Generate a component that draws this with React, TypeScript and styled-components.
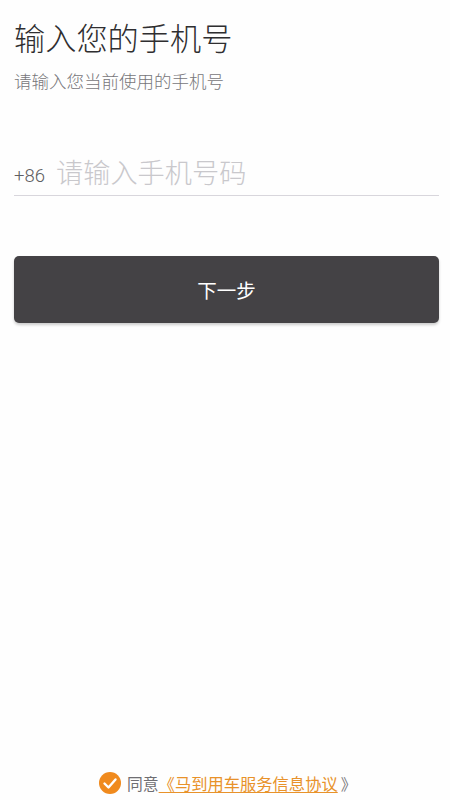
import React from 'react';
import styled, { createGlobalStyle } from 'styled-components';

const GlobalStyle = createGlobalStyle`
  html, body {
    margin: 0;
    padding: 0;
    background: #fefefe;
  }
  body {
    font-family: 'Roboto', 'Noto Sans CJK SC', sans-serif;
  }
`;

const Page = styled.div`
  width: 450px;
  height: 800px;
  box-sizing: border-box;
  overflow: hidden;
  padding: 20px 11px 0 14px;
  display: flex;
  flex-direction: column;
  background: #fefefe;
`;

const Title = styled.h1`
  margin: 0;
  font-size: 31.2px;
  line-height: 40px;
  font-weight: 300;
  color: #2f2e30;
`;

const Subtitle = styled.p`
  margin: 2px 0 0;
  font-size: 17.5px;
  line-height: 40px;
  font-weight: 300;
  color: #77767a;
`;

const PhoneRow = styled.div`
  margin-top: 49px;
  height: 44px;
  display: flex;
  align-items: center;
  border-bottom: 1px solid #d8d6dc;
`;

const Prefix = styled.span`
  width: 42px;
  flex: none;
  padding-top: 5px;
  font-size: 18.5px;
  font-weight: 300;
  color: #5f5e62;
`;

const PhoneInput = styled.input`
  flex: 1;
  min-width: 0;
  padding: 2px 0 0;
  border: none;
  outline: none;
  background: transparent;
  font-family: inherit;
  font-size: 27.2px;
  font-weight: 300;
  color: #2f2e30;

  &::placeholder {
    color: #c9c8cc;
    opacity: 1;
  }
`;

const NextButton = styled.button`
  margin-top: 60px;
  height: 67px;
  width: 100%;
  border: none;
  border-radius: 5px;
  background: #444245;
  box-shadow: 0 2px 3px rgba(0, 0, 0, 0.2);
  color: #fff;
  font-family: inherit;
  font-size: 19.5px;
`;

const Agreement = styled.div`
  margin: auto 0 5px 85px;
  height: 24px;
  display: flex;
  align-items: center;
  font-size: 15.8px;
  white-space: nowrap;
`;

const CheckBadge = styled.svg`
  width: 22px;
  height: 22px;
  flex: none;
  margin-right: 6px;
`;

const AgreeLabel = styled.span`
  color: #6f6e72;
`;

const AgreementLink = styled.a`
  color: #e8922a;
  font-size: 16.3px;
  text-decoration: underline;
  text-underline-offset: 2px;
`;

const ClosingMark = styled.span`
  margin-left: 3px;
  color: #77767a;
`;

const App: React.FC = () => (
  <>
    <GlobalStyle />
    <Page>
      <Title>输入您的手机号</Title>
      <Subtitle>请输入您当前使用的手机号</Subtitle>
      <PhoneRow>
        <Prefix>+86</Prefix>
        <PhoneInput placeholder="请输入手机号码" />
      </PhoneRow>
      <NextButton>下一步</NextButton>
      <Agreement>
        <CheckBadge viewBox="0 0 22 22">
          <circle cx="11" cy="11" r="11" fill="#f08a1d" />
          <path d="M5.5 11.5l4 4 7-8" fill="none" stroke="#fff" strokeWidth="2.4" strokeLinecap="round" strokeLinejoin="round" />
        </CheckBadge>
        <AgreeLabel>同意</AgreeLabel>
        <AgreementLink>《马到用车服务信息协议</AgreementLink>
        <ClosingMark>》</ClosingMark>
      </Agreement>
    </Page>
  </>
);

export default App;
